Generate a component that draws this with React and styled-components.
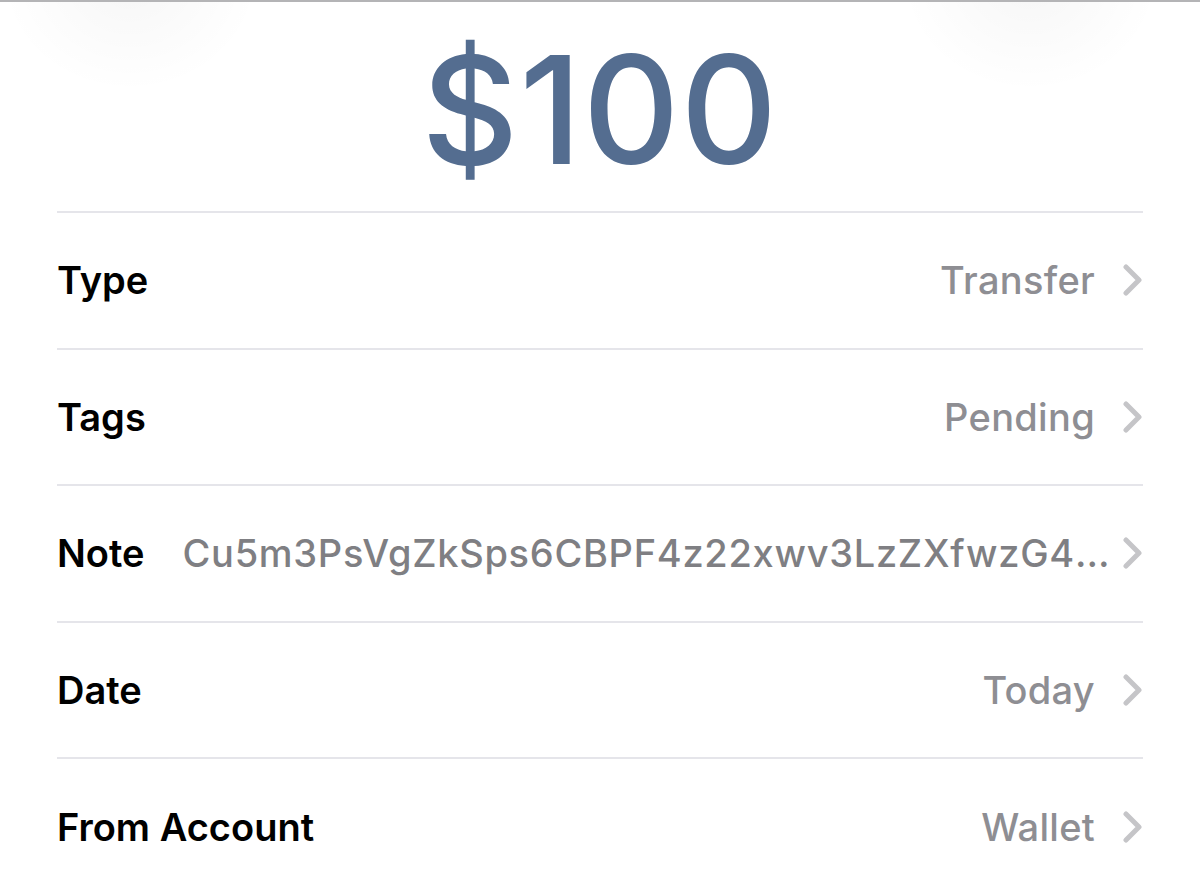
import React from "react";
import styled, { createGlobalStyle } from "styled-components";

const Global = createGlobalStyle`
  html, body { margin: 0; padding: 0; background: #ffffff; }
  body { font-family: Inter, "Liberation Sans", Arial, sans-serif; -webkit-font-smoothing: antialiased; }
`;

const Screen = styled.div`
  width: 1200px;
  height: 890px;
  overflow: hidden;
  background: #ffffff;
  border-top: 2px solid #b4b4b6;
  box-sizing: border-box;
  position: relative;
`;

const Glow = styled.div`
  position: absolute;
  top: -140px;
  width: 260px;
  height: 230px;
  border-radius: 50%;
  background: radial-gradient(closest-side, rgba(0,0,0,0.035), rgba(0,0,0,0));
  left: ${(p) => p.$left};
`;

const Content = styled.div`
  position: relative;
  padding: 0 57px;
  display: flex;
  flex-direction: column;
`;

const Header = styled.div`
  height: 209px;
  display: flex;
  justify-content: center;
  align-items: flex-start;
`;

const Amount = styled.div`
  font-family: Inter, "Liberation Sans", Arial, sans-serif;
  font-weight: 500;
  font-size: 150px;
  line-height: 1;
  color: #546d90;
  letter-spacing: 1px;
  margin-top: 33px;
`;

const Row = styled.div`
  box-sizing: border-box;
  height: 136.6px;
  border-top: 2px solid #e5e5ea;
  display: flex;
  align-items: center;
  gap: 38px;
`;

const Label = styled.div`
  flex: none;
  font-family: Inter, "Liberation Sans", sans-serif;
  font-size: 38px;
  font-weight: 600;
  color: #000000;
`;

const Value = styled.div`
  flex: 1;
  min-width: 0;
  text-align: right;
  font-family: Inter, "Liberation Sans", Arial, sans-serif;
  font-size: 38px;
  font-weight: 500;
  color: ${(p) => (p.$long ? "#7f7f83" : "#8e8e93")};
  white-space: nowrap;
  overflow: hidden;
  text-overflow: ellipsis;
  letter-spacing: ${(p) => (p.$long ? "0.7px" : "0.3px")};
`;

const ValueWrap = styled.div`
  flex: 1;
  min-width: 0;
  display: flex;
  align-items: center;
  gap: ${(p) => (p.$tight ? "10px" : "28px")};
`;

const Chevron = () => (
  <svg width="20" height="32" viewBox="0 0 20 32" style={{ flex: "none" }}>
    <path d="M3 3 L16 16 L3 29" fill="none" stroke="#c5c5c8" strokeWidth="5" strokeLinecap="round" strokeLinejoin="round" />
  </svg>
);

const rows = [
  { label: "Type", value: "Transfer" },
  { label: "Tags", value: "Pending" },
  { label: "Note", value: "Cu5m3PsVgZkSps6CBPF4z22xwv3LzZXfwzG4h8KqTx9", long: true },
  { label: "Date", value: "Today" },
  { label: "From Account", value: "Wallet" },
];

export default function App() {
  return (
    <>
      <Global />
      <Screen>
        <Glow $left="0px" />
        <Glow $left="900px" />
        <Content>
          <Header>
            <Amount>$100</Amount>
          </Header>
          {rows.map((r) => (
            <Row key={r.label}>
              <Label>{r.label}</Label>
              <ValueWrap $tight={r.long}>
                <Value $long={r.long}>{r.value}</Value>
                <Chevron />
              </ValueWrap>
            </Row>
          ))}
        </Content>
      </Screen>
    </>
  );
}
